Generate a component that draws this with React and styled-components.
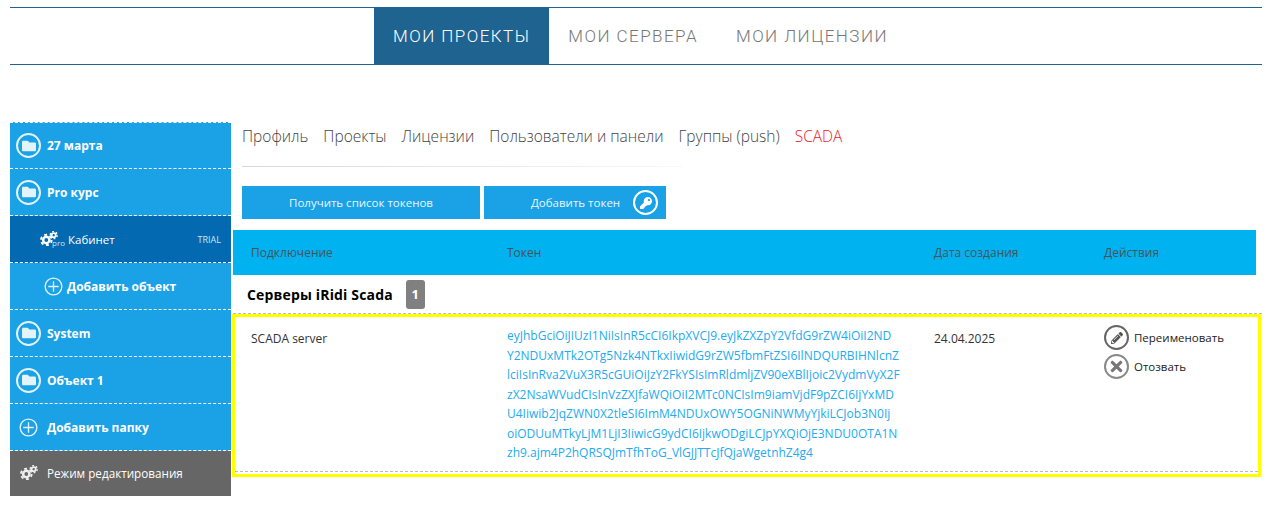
import styled, { createGlobalStyle } from "styled-components";
import { FaFolder, FaKey, FaPencilAlt, FaTimes } from "react-icons/fa";

const GlobalStyle = createGlobalStyle`
  html, body {
    margin: 0;
    background: #fff;
    font-family: "Open Sans", "Noto Sans", sans-serif;
  }
`;

const Page = styled.div`
  padding: 7px 10px 0;
`;

const TopNav = styled.nav`
  display: flex;
  justify-content: center;
  height: 56px;
  padding-left: 9px;
  border-top: 1px solid #1f6491;
  border-bottom: 1px solid #1f6491;
`;

const TopTab = styled.a`
  display: flex;
  align-items: center;
  padding: 0 19px;
  font-family: Roboto, sans-serif;
  font-size: 17px;
  font-weight: 300;
  letter-spacing: 1.45px;
  color: ${(p) => (p.$active ? "#fff" : "#777")};
  background: ${(p) => (p.$active ? "#1f6491" : "transparent")};
`;

const Body = styled.div`
  display: flex;
  margin-top: 57px;
`;

const Sidebar = styled.aside`
  flex: 0 0 221px;
  height: 374px;
  display: flex;
  flex-direction: column;
  background: #1ba1e6;
  border-top: 1px dashed #fff;
  box-sizing: border-box;
`;

const SideRow = styled.div`
  flex: 0 0 47px;
  box-sizing: border-box;
  display: flex;
  align-items: center;
  padding-left: ${(p) => p.$indent || 6}px;
  border-bottom: 1px dashed #fff;
  background: ${(p) => p.$bg || "transparent"};
  color: #fff;
  font-size: 12px;
  font-weight: 700;
  &:first-child {
    flex-basis: 46px;
  }
  &:last-child {
    flex-basis: 45px;
    padding-bottom: 2px;
    border-bottom: none;
  }
`;

const RowText = styled.span`
  margin-left: ${(p) => p.$gap || 6}px;
  font-size: ${(p) => p.$size || 12}px;
  font-weight: ${(p) => p.$weight || 700};
`;

const Trial = styled.span`
  margin-left: auto;
  margin-right: 10px;
  font-size: 9px;
  font-weight: 400;
  color: #cde6f5;
`;

const Ring = styled.span`
  flex: none;
  box-sizing: border-box;
  width: ${(p) => p.$size || 25}px;
  height: ${(p) => p.$size || 25}px;
  border: 2px solid ${(p) => p.$color || "#e3f3fc"};
  border-radius: 50%;
  display: flex;
  align-items: center;
  justify-content: center;
  color: ${(p) => p.$glyph || p.$color || "#e3f3fc"};
  font-size: ${(p) => p.$icon || 14}px;
`;

const ProMark = styled.span`
  display: flex;
  align-items: flex-end;
  font-size: 8px;
  font-weight: 400;
  line-height: 8px;
  color: #cde6f5;
  svg {
    margin-right: -6px;
    margin-bottom: 1px;
  }
`;

const Main = styled.main`
  flex: 1;
  margin-left: 2px;
  min-width: 0;
`;

const SubNav = styled.div`
  display: flex;
  gap: 15px;
  margin-left: 9px;
  padding: 4px 0 20px;
  width: 440px;
  background: linear-gradient(90deg, #d8d8d8, #f8f8f8) left bottom / 100% 1px no-repeat;
`;

const SubLink = styled.a`
  font-size: 15.5px;
  font-weight: 300;
  line-height: 21px;
  white-space: nowrap;
  color: ${(p) => (p.$red ? "#f0141e" : "#444")};
`;

const Buttons = styled.div`
  display: flex;
  gap: 4px;
  margin: 19px 0 11px 9px;
`;

const Button = styled.button`
  box-sizing: border-box;
  width: ${(p) => p.$w}px;
  height: 33px;
  border: none;
  padding: ${(p) => (p.$icon ? "0 8px 0 47px" : "0")};
  display: flex;
  align-items: center;
  justify-content: ${(p) => (p.$icon ? "space-between" : "center")};
  background: #1ba1e6;
  color: #e8f6fd;
  font-family: inherit;
  font-size: 11.5px;
`;

const Columns = styled.div`
  display: grid;
  grid-template-columns: 274px 427px 170px 1fr;
`;

const HeadRow = styled(Columns)`
  height: 45px;
  margin-right: 6px;
  align-items: center;
  background: #00b2ef;
  color: #47535b;
  font-size: 12px;
  > span:first-child {
    padding-left: 18px;
  }
`;

const GroupRow = styled.div`
  height: 39px;
  box-sizing: border-box;
  display: flex;
  align-items: center;
  padding-left: 14px;
  border-bottom: 1px dashed #bbb;
  font-size: 14px;
  font-weight: 700;
  letter-spacing: 0.16px;
  color: #000;
`;

const Badge = styled.span`
  margin-left: 13px;
  width: 19px;
  height: 29px;
  border-radius: 3px;
  background: #808080;
  color: #fff;
  font-size: 13px;
  display: flex;
  align-items: center;
  justify-content: center;
`;

const YellowFrame = styled.div`
  box-sizing: border-box;
  height: 163px;
  margin: 0 1px 0 -1px;
  border: 3px solid #ffff00;
`;

const TokenRow = styled(Columns)`
  box-sizing: border-box;
  height: 155px;
  grid-template-columns: 272px 427px 170px 1fr;
  padding-top: 9px;
  border-bottom: 1px dashed #bbb;
  font-size: 12px;
  color: #333;
`;

const NameCell = styled.span`
  padding: 4px 0 0 16px;
`;

const DateCell = styled.span`
  padding-top: 4px;
`;

const Token = styled.div`
  color: #22abef;
  line-height: 19.5px;
  font-size: 12px;
`;

const TokenLine = styled.div`
  white-space: nowrap;
`;

const Actions = styled.div`
  display: flex;
  flex-direction: column;
  gap: 4px;
  margin-top: -1px;
`;

const Action = styled.div`
  display: flex;
  align-items: center;
  gap: 5px;
  color: #222;
  font-size: 11.5px;
`;

const tokenLines = [
  "eyJhbGciOiJIUzI1NiIsInR5cCI6IkpXVCJ9.eyJkZXZpY2VfdG9rZW4iOiI2ND",
  "Y2NDUxMTk2OTg5Nzk4NTkxIiwidG9rZW5fbmFtZSI6IlNDQURBIHNlcnZ",
  "lciIsInRva2VuX3R5cGUiOiJzY2FkYSIsImRldmljZV90eXBlIjoic2VydmVyX2F",
  "zX2NsaWVudCIsInVzZXJfaWQiOiI2MTc0NCIsIm9iamVjdF9pZCI6IjYxMD",
  "U4Iiwib2JqZWN0X2tleSI6ImM4NDUxOWY5OGNiNWMyYjkiLCJob3N0Ij",
  "oiODUuMTkyLjM1LjI3IiwicG9ydCI6IjkwODgiLCJpYXQiOjE3NDU0OTA1N",
  "zh9.ajm4P2hQRSQJmTfhToG_VlGJJTTcJfQjaWgetnhZ4g4",
];

const PlusIcon = ({ size = 19 }) => (
  <svg width={size} height={size} viewBox="0 0 20 20" fill="none" stroke="#e3f3fc" strokeWidth="1.4">
    <circle cx="10" cy="10" r="8.8" />
    <path d="M10 4.5v11M4.5 10h11" />
  </svg>
);

// big gear lower left, small gear upper right
const GearsIcon = ({ color = "#fff", width = 18 }) => (
  <svg width={width} height={width * 0.85} viewBox="0 0 20 17" fill="none" stroke={color}>
    <circle cx="7" cy="10" r="3.5" strokeWidth="2.8" />
    <circle cx="7" cy="10" r="5.9" strokeWidth="2.2" strokeDasharray="3.2 2.98" />
    <circle cx="15.2" cy="4.6" r="2.3" strokeWidth="2" />
    <circle cx="15.2" cy="4.6" r="3.9" strokeWidth="1.6" strokeDasharray="2 2.08" />
  </svg>
);

const FolderRow = ({ children }) => (
  <SideRow>
    <Ring>
      <FaFolder />
    </Ring>
    <RowText>{children}</RowText>
  </SideRow>
);

export default function App() {
  return (
    <Page>
      <GlobalStyle />
      <TopNav>
        <TopTab $active>МОИ ПРОЕКТЫ</TopTab>
        <TopTab>МОИ СЕРВЕРА</TopTab>
        <TopTab>МОИ ЛИЦЕНЗИИ</TopTab>
      </TopNav>
      <Body>
        <Sidebar>
          <FolderRow>27 марта</FolderRow>
          <FolderRow>Pro курс</FolderRow>
          <SideRow $bg="#0369b1" $indent={30}>
            <ProMark>
              <GearsIcon />
              pro
            </ProMark>
            <RowText $gap={3} $weight={400} $size={11.5}>Кабинет</RowText>
            <Trial>TRIAL</Trial>
          </SideRow>
          <SideRow $indent={34}>
            <PlusIcon />
            <RowText $gap={4}>Добавить объект</RowText>
          </SideRow>
          <FolderRow>System</FolderRow>
          <FolderRow>Объект 1</FolderRow>
          <SideRow $indent={9}>
            <PlusIcon />
            <RowText $gap={9}>Добавить папку</RowText>
          </SideRow>
          <SideRow $bg="#666" $indent={10}>
            <GearsIcon color="#eee" />
            <RowText $gap={9} $weight={400} $size={11.7}>Режим редактирования</RowText>
          </SideRow>
        </Sidebar>
        <Main>
          <SubNav>
            <SubLink>Профиль</SubLink>
            <SubLink>Проекты</SubLink>
            <SubLink>Лицензии</SubLink>
            <SubLink>Пользователи и панели</SubLink>
            <SubLink>Группы (push)</SubLink>
            <SubLink $red>SCADA</SubLink>
          </SubNav>
          <Buttons>
            <Button $w={238}>Получить список токенов</Button>
            <Button $w={182} $icon>
              Добавить токен
              <Ring $size={25} $color="#fff" $icon={12}>
                <FaKey />
              </Ring>
            </Button>
          </Buttons>
          <HeadRow>
            <span>Подключение</span>
            <span>Токен</span>
            <span>Дата создания</span>
            <span>Действия</span>
          </HeadRow>
          <GroupRow>
            Серверы iRidi Scada
            <Badge>1</Badge>
          </GroupRow>
          <YellowFrame>
            <TokenRow>
              <NameCell>SCADA server</NameCell>
              <Token>
                {tokenLines.map((line) => (
                  <TokenLine key={line}>{line}</TokenLine>
                ))}
              </Token>
              <DateCell>24.04.2025</DateCell>
              <Actions>
                <Action>
                  <Ring $size={25} $color="#666" $glyph="#555" $icon={12}>
                    <FaPencilAlt />
                  </Ring>
                  Переименовать
                </Action>
                <Action>
                  <Ring $size={25} $color="#888" $glyph="#777" $icon={17}>
                    <FaTimes />
                  </Ring>
                  Отозвать
                </Action>
              </Actions>
            </TokenRow>
          </YellowFrame>
        </Main>
      </Body>
    </Page>
  );
}
